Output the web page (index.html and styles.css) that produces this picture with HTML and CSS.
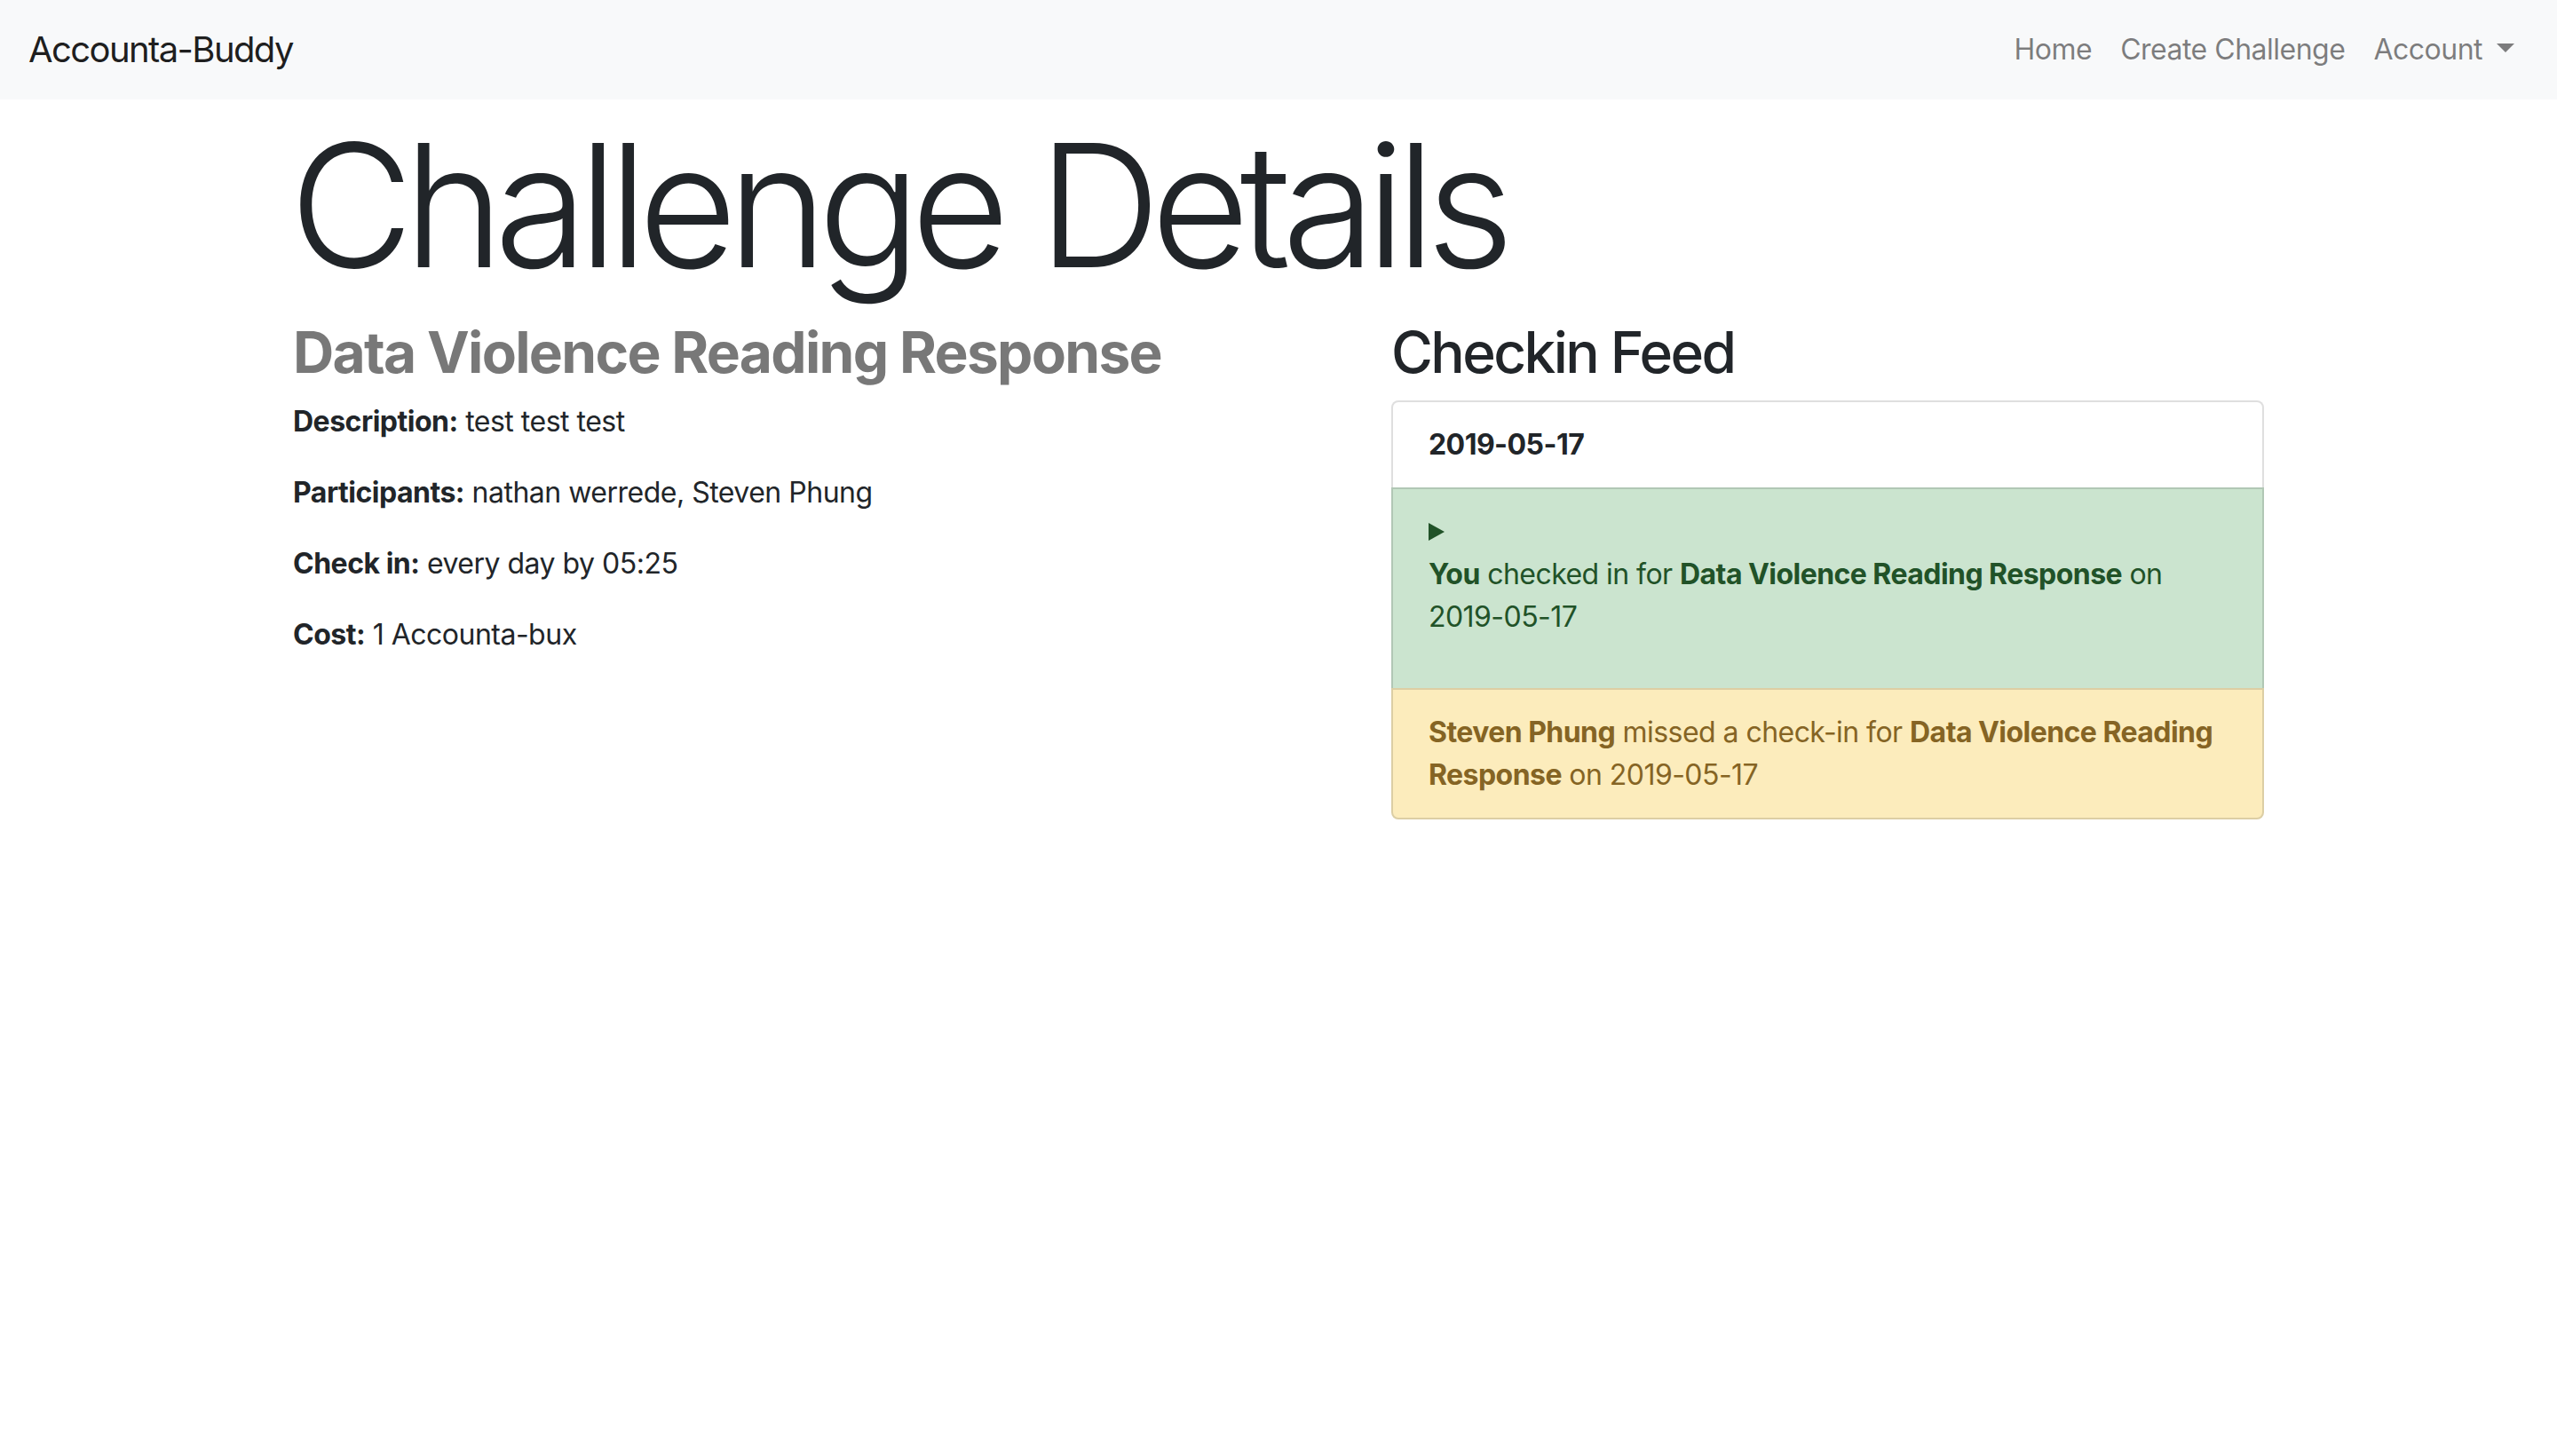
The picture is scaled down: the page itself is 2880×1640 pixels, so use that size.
FILE: index.html
```html
<!DOCTYPE html>
<html lang="en">
<head>
<meta charset="utf-8">
<title>Accounta-Buddy</title>
<link rel="stylesheet" href="styles.css">
</head>
<body>
<nav class="navbar">
  <a class="brand" href="#">Accounta-Buddy</a>
  <ul class="nav">
    <li><a class="nav-link" href="#">Home</a></li>
    <li><a class="nav-link" href="#">Create Challenge</a></li>
    <li><a class="nav-link dropdown" href="#">Account<span class="caret"></span></a></li>
  </ul>
</nav>
<main class="container">
  <h1 class="display">Challenge Details</h1>
  <div class="row">
    <section class="details">
      <h2 class="title muted">Data Violence Reading Response</h2>
      <p><strong>Description:</strong> test test test</p>
      <p><strong>Participants:</strong> nathan werrede, Steven Phung</p>
      <p><strong>Check in:</strong> every day by 05:25</p>
      <p><strong>Cost:</strong> 1 Accounta-bux</p>
    </section>
    <section class="feed">
      <h2 class="title">Checkin Feed</h2>
      <ul class="list-group">
        <li class="item item-header">2019-05-17</li>
        <li class="item item-success">
          <div class="summary"><svg class="marker" width="18" height="20" viewBox="0 0 18 20"><polygon points="0,0 18,10 0,20" fill="currentColor"/></svg></div>
          <p><strong>You</strong> checked in for <strong>Data Violence Reading Response</strong> on 2019-05-17</p>
        </li>
        <li class="item item-warning">
          <strong>Steven Phung</strong> missed a check-in for <strong>Data Violence Reading Response</strong> on 2019-05-17
        </li>
      </ul>
    </section>
  </div>
</main>
</body>
</html>
```

FILE: styles.css
```css
* { box-sizing: border-box; }

html, body {
  margin: 0;
  padding: 0;
  background: #ffffff;
}

body {
  font-family: Inter, "Noto Sans", "Liberation Sans", sans-serif;
  font-size: 32px;
  line-height: 1.5;
  color: #212529;
  letter-spacing: -0.5px;
}

a { text-decoration: none; }

/* Navbar */
.navbar {
  display: flex;
  align-items: center;
  justify-content: space-between;
  height: 112px;
  padding: 16px 32px;
  background: #f8f9fa;
}

.brand {
  font-size: 40px;
  line-height: 60px;
  padding: 10px 0;
  color: rgba(0, 0, 0, 0.9);
  letter-spacing: -1.6px;
}

.nav {
  display: flex;
  list-style: none;
  margin: 0;
  padding: 0;
}

.nav-link {
  display: flex;
  align-items: center;
  padding: 16px 16px;
  color: rgba(0, 0, 0, 0.5);
}

.caret {
  display: inline-block;
  margin-left: 16px;
  width: 0;
  height: 0;
  border-top: 10px solid rgba(0, 0, 0, 0.5);
  border-left: 10px solid transparent;
  border-right: 10px solid transparent;
  margin-top: -4px;
}

/* Container */
.container {
  width: 2280px;
  margin: 0 auto;
  padding: 0 30px;
}

.display {
  font-size: 192px;
  font-weight: 300;
  line-height: 230px;
  margin: 0 0 16px -4px;
  padding-top: 4px;
  letter-spacing: -11px;
}

.row {
  display: grid;
  grid-template-columns: 1fr 983px;
  column-gap: 60px;
  margin-top: -4px;
}

.title {
  font-size: 64px;
  font-weight: 500;
  line-height: 77px;
  margin: 0 0 16px;
  letter-spacing: -2.6px;
}

.muted {
  color: #787878;
  font-weight: 700;
  letter-spacing: -1.7px;
}

.details p {
  margin: 0 0 32px;
}

strong { font-weight: 700; }

/* Feed */
.list-group {
  list-style: none;
  margin: 0;
  padding: 0;
  display: flex;
  flex-direction: column;
}

.item {
  border: 2px solid rgba(0, 0, 0, 0.125);
  padding: 24px 40px;
  margin-bottom: -2px;
  letter-spacing: -0.55px;
}

.item:first-child {
  border-top-left-radius: 8px;
  border-top-right-radius: 8px;
}

.item:last-child {
  margin-bottom: 0;
  border-bottom-left-radius: 8px;
  border-bottom-right-radius: 8px;
}

.item-header {
  background: #ffffff;
  font-weight: 700;
  color: #212529;
}

.item-success {
  background: #cbe4cf;
  color: #215228;
}

.item-success p {
  margin: 0 0 32px;
}

.summary {
  height: 48px;
  display: flex;
  align-items: center;
}

.marker {
  display: block;
}

.item-warning {
  background: #fcecbc;
  color: #856424;
}
```
